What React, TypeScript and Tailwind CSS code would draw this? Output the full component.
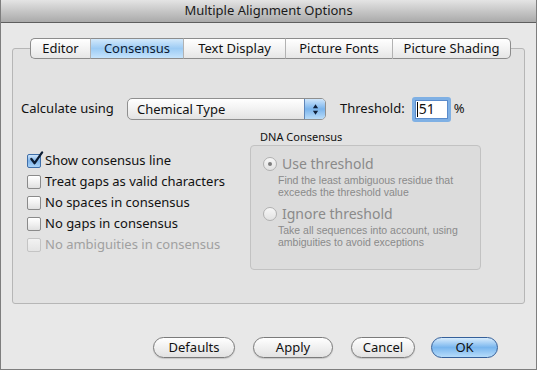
const font = { fontFamily: '"Lucida Grande", "Noto Sans", "DejaVu Sans", sans-serif' };
const small = { fontFamily: '"Liberation Sans", Arial, sans-serif' };

const tabs = [
  { label: "Editor", w: "w-[60px]" },
  { label: "Consensus", w: "w-[93px]", active: true },
  { label: "Text Display", w: "w-[102px]" },
  { label: "Picture Fonts", w: "w-[107px]" },
  { label: "Picture Shading", w: "w-[119px]" },
];

const checks = [
  { label: "Show consensus line", checked: true },
  { label: "Treat gaps as valid characters" },
  { label: "No spaces in consensus" },
  { label: "No gaps in consensus" },
  { label: "No ambiguities in consensus", disabled: true },
];

function CheckBox({ checked, disabled }: { checked?: boolean; disabled?: boolean }) {
  if (checked) {
    return (
      <span className="relative flex h-[14px] w-[14px] shrink-0 items-center justify-center rounded-[2px] border border-[#3f6ea8] bg-gradient-to-b from-[#cfe5fa] via-[#7fb4ea] to-[#a9d3f7]">
        <svg viewBox="0 0 16 16" className="absolute -top-[4px] left-[1px] h-[15px] w-[15px]">
          <path d="M2.5 8.5 L6 13 L14 1.5" fill="none" stroke="#0d1d33" strokeWidth="2.4" strokeLinecap="round" strokeLinejoin="round" />
        </svg>
      </span>
    );
  }
  return (
    <span
      className={
        disabled
          ? "h-[14px] w-[14px] shrink-0 rounded-[2px] border border-[#c4c4c4] bg-gradient-to-b from-[#f2f2f2] to-[#e4e4e4]"
          : "h-[14px] w-[14px] shrink-0 rounded-[2px] border border-[#8a8a8a] bg-gradient-to-b from-[#ffffff] via-[#f1f1f1] to-[#e0e0e0] shadow-[inset_0_1px_0_#fff]"
      }
    />
  );
}

function Radio({ on }: { on?: boolean }) {
  return (
    <span className="flex h-[14px] w-[14px] shrink-0 items-center justify-center rounded-full border border-[#b0b0b0] bg-gradient-to-b from-[#f7f7f7] to-[#e2e2e2]">
      {on && <span className="h-[4px] w-[4px] rounded-full bg-[#7d7d7d]" />}
    </span>
  );
}

function Button({ label, w, primary }: { label: string; w: string; primary?: boolean }) {
  return (
    <div
      className={
        primary
          ? `flex h-[21px] ${w} items-center justify-center rounded-full border border-[#35609a] bg-gradient-to-b from-[#d8ecfc] via-[#79b6ee] to-[#b6dcfa] text-[13px] text-[#111]`
          : `flex h-[21px] ${w} items-center justify-center rounded-full border border-[#7b7b7b] bg-gradient-to-b from-[#ffffff] via-[#f0f0f0] to-[#e2e2e2] text-[13px] text-[#111] shadow-[0_1px_1px_rgba(0,0,0,0.15)]`
      }
    >
      {label}
    </div>
  );
}

export default function App() {
  return (
    <div style={font} className="flex h-[370px] w-[537px] flex-col overflow-hidden border-x border-b border-[#7e7e7e] bg-[#e8e8e8] text-[13px] text-[#111]">
      <div className="flex h-[23px] shrink-0 items-center justify-center border-b border-[#5e5e5e] bg-gradient-to-b from-[#e4e4e4] to-[#aaaaaa] text-[13px] text-[#1a1a1a]">
        Multiple Alignment Options
      </div>

      <div className="relative z-10 ml-[29px] mt-[15px] flex h-[21px] shrink-0">
        {tabs.map((t, i) => (
          <div
            key={t.label}
            className={[
              "flex h-full items-center justify-center border-y border-[#8c8c8c] text-[13px]",
              t.w,
              i === 0 ? "rounded-l-[5px] border-l" : "border-l border-l-[#b2b2b2]",
              i === tabs.length - 1 ? "rounded-r-[5px] border-r" : "",
              t.active
                ? "bg-gradient-to-b from-[#d3e9fb] via-[#9ccbf4] to-[#c6e4fc] text-[#0b1a33]"
                : "bg-gradient-to-b from-[#ffffff] via-[#f3f3f3] to-[#e6e6e6] text-[#111]",
            ].join(" ")}
          >
            {t.label}
          </div>
        ))}
      </div>

      <div className="mx-[11px] -mt-[11px] h-[256px] shrink-0 rounded-[3px] border border-[#b6b6b6] bg-[#e2e2e2] pl-[8px] pt-[48px]">
        <div className="flex h-[24px] items-center">
          <span className="w-[106px]">Calculate using</span>
          <div className="flex h-[22px] w-[199px] overflow-hidden rounded-[5px] border border-[#8f8f8f] bg-gradient-to-b from-[#ffffff] via-[#f2f2f2] to-[#e3e3e3]">
            <span className="flex-1 pl-[9px] leading-[20px]">Chemical Type</span>
            <span className="flex w-[21px] items-center justify-center border-l border-[#5f86b8] bg-gradient-to-b from-[#cfe6fb] via-[#7ab4ec] to-[#b9dcf9]">
              <svg viewBox="0 0 8 14" className="h-[13px] w-[7px]">
                <path d="M4 1 L7 5.5 L1 5.5 Z M4 13 L7 8.5 L1 8.5 Z" fill="#10203a" />
              </svg>
            </span>
          </div>
          <span className="ml-[14px]">Threshold:</span>
          <div className="ml-[7px] flex h-[25px] w-[39px] items-center rounded-[3px] border-[3px] border-[#7fb0e4] bg-white">
            <div className="flex h-full w-full items-center border border-[#5b8ccc] pl-[1px] text-[14px] leading-none">
              <span className="mr-[1px] h-[15px] w-[1px] bg-black" />
              51
            </div>
          </div>
          <span className="ml-[3px]">%</span>
        </div>

        <div className="mt-[9px] flex">
          <div className="ml-[6px] flex w-[223px] flex-col pt-[20px]">
            {checks.map((c) => (
              <div key={c.label} className={`flex h-[21px] items-center gap-[4px] ${c.disabled ? "text-[#a0a0a0]" : ""}`}>
                <CheckBox checked={c.checked} disabled={c.disabled} />
                <span>{c.label}</span>
              </div>
            ))}
          </div>

          <div className="flex flex-col">
            <span className="h-[15px] pl-[10px] text-[11px] leading-[13px]">DNA Consensus</span>
            <div className="h-[125px] w-[231px] rounded-[4px] border border-[#c2c2c2] bg-[#dcdcdc] pl-[12px] pt-[11px] text-[#8a8a8a]">
              <div className="flex items-center gap-[5px] text-[14px] leading-[14px]">
                <Radio on />
                <span>Use threshold</span>
              </div>
              <div style={small} className="mt-[3px] pl-[15px] text-[10.5px] leading-[12px]">
                <div>Find the least ambiguous residue that</div>
                <div>exceeds the threshold value</div>
              </div>
              <div className="mt-[9px] flex items-center gap-[5px] text-[14px] leading-[14px]">
                <Radio />
                <span>Ignore threshold</span>
              </div>
              <div style={small} className="mt-[3px] pl-[15px] text-[10.5px] leading-[12px]">
                <div>Take all sequences into account, using</div>
                <div>ambiguities to avoid exceptions</div>
              </div>
            </div>
          </div>
        </div>
      </div>

      <div className="mr-[38px] mt-[33px] flex justify-end gap-[16px]">
        <Button label="Defaults" w="w-[82px]" />
        <div className="mx-[2px]">
          <Button label="Apply" w="w-[80px]" />
        </div>
        <Button label="Cancel" w="w-[64px]" />
        <Button label="OK" w="w-[67px]" primary />
      </div>
    </div>
  );
}
